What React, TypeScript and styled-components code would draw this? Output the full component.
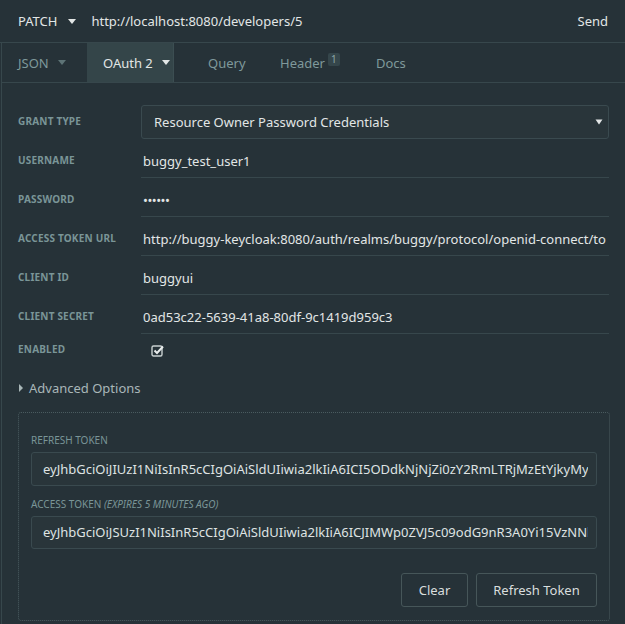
import React from "react";
import styled, { createGlobalStyle } from "styled-components";

const Global = createGlobalStyle`
  html, body { margin: 0; padding: 0; background: #263238; }
  body { font-family: "Noto Sans", "Open Sans", sans-serif; color: #d9dede; }
  * { box-sizing: border-box; }
`;

const Page = styled.div`
  width: 625px;
  height: 624px;
  background: #263238;
  overflow: hidden;
  display: flex;
  flex-direction: column;
`;

const TopBar = styled.div`
  height: 43px;
  display: flex;
  align-items: center;
  padding: 0 18px;
  font-size: 13px;
  border-bottom: 1px solid #37474c;
  color: #e2e6e6;
`;

const Method = styled.div`
  display: flex;
  align-items: center;
  gap: 11px;
  margin-right: 15px;
`;

const Caret = styled.span<{ $c?: string }>`
  width: 0;
  height: 0;
  border-left: 4px solid transparent;
  border-right: 4px solid transparent;
  border-top: 5px solid ${(p) => p.$c || "#e2e6e6"};
  display: inline-block;
`;

const Url = styled.div`
  flex: 1;
`;

const Send = styled.div`
  margin-right: -1px;
`;

const Body = styled.div`
  flex: 1;
  min-width: 0;
  margin-left: 1px;
  border-left: 1px solid #37474c;
  display: flex;
  flex-direction: column;
`;

const Tabs = styled.div`
  height: 40px;
  display: flex;
  border-bottom: 1px solid #37474c;
  font-size: 13px;
`;

const Tab = styled.div<{ $active?: boolean; $w: number; $pl: number }>`
  width: ${(p) => p.$w}px;
  padding-left: ${(p) => p.$pl}px;
  display: flex;
  align-items: center;
  gap: 9px;
  color: ${(p) => (p.$active ? "#e2e6e6" : "#7f999b")};
  background: ${(p) => (p.$active ? "#344549" : "transparent")};
  border-right: ${(p) => (p.$active ? "1px solid #3c4e52" : "none")};
`;

const Badge = styled.span`
  font-size: 10px;
  background: #35464b;
  color: #8fa6a8;
  border-radius: 2px;
  padding: 0 3px;
  line-height: 13px;
  margin-left: -6px;
  margin-top: -7px;
`;

const Form = styled.div`
  padding: 22px 16px 0 16px;
  display: flex;
  flex-direction: column;
  gap: 5px;
`;

const Row = styled.div<{ $h?: number }>`
  display: grid;
  grid-template-columns: 123px minmax(0, 1fr);
  align-items: center;
  height: ${(p) => p.$h || 34}px;
`;

const Label = styled.div`
  font-size: 10px;
  font-weight: 700;
  color: #7a9597;
  letter-spacing: 0.2px;
  margin-top: -2px;
`;

const Select = styled.div`
  height: 34px;
  border: 1px solid #3a4a4f;
  border-radius: 3px;
  background: #29353a;
  display: flex;
  align-items: center;
  justify-content: space-between;
  padding: 0 5px 0 12px;
  font-size: 13px;
  color: #e2e6e6;
`;

const Field = styled.div`
  height: 34px;
  min-width: 0;
  border-bottom: 1px solid #37474c;
  display: flex;
  align-items: center;
  padding: 0 3px 0 2px;
  font-size: 13px;
  color: #e2e6e6;
`;

const Clip = styled.span`
  flex: 1;
  min-width: 0;
  overflow: hidden;
  white-space: nowrap;
`;

const Dots = styled.span`
  font-size: 13px;
  letter-spacing: -0.5px;
`;

const CheckWrap = styled.div`
  padding-left: 10px;
  display: flex;
  align-items: center;
`;

const Advanced = styled.div`
  display: flex;
  align-items: center;
  gap: 6px;
  font-size: 13px;
  color: #a9b7b8;
  padding-left: 1px;
  margin-top: 13px;
`;

const Tri = styled.span`
  width: 0;
  height: 0;
  border-top: 4px solid transparent;
  border-bottom: 4px solid transparent;
  border-left: 4px solid #a9b7b8;
`;

const Box = styled.div`
  margin: 15px 15px 0 16px;
  height: 209px;
  min-width: 0;
  border: 1px dotted #4a5b5f;
  border-radius: 3px;
  padding: 21px 12px 13px 12px;
  display: flex;
  flex-direction: column;
`;

const BoxLabel = styled.div<{ $gap?: number }>`
  font-size: 10px;
  color: #7a9597;
  line-height: 12px;
  margin-top: ${(p) => p.$gap || 0}px;
  margin-bottom: 6px;
`;

const Em = styled.em`
  font-style: italic;
`;

const TokenInput = styled.div`
  height: 34px;
  min-width: 0;
  border: 1px solid #3a4a4f;
  border-radius: 3px;
  background: #29353a;
  display: flex;
  align-items: center;
  padding: 0 8px 0 11px;
  font-size: 13px;
  color: #dfe3e3;
`;

const Actions = styled.div`
  display: flex;
  justify-content: flex-end;
  gap: 8px;
  margin-top: 24px;
`;

const Button = styled.div<{ $w: number }>`
  width: ${(p) => p.$w}px;
  height: 34px;
  border: 1px solid #465659;
  border-radius: 3px;
  display: flex;
  align-items: center;
  justify-content: center;
  font-size: 13px;
  color: #d9dede;
`;

export default function App() {
  return (
    <Page>
      <Global />
      <TopBar>
        <Method>
          PATCH <Caret />
        </Method>
        <Url>http://localhost:8080/developers/5</Url>
        <Send>Send</Send>
      </TopBar>
      <Body>
        <Tabs>
          <Tab $w={85} $pl={16}>
            JSON <Caret $c="#5d7376" />
          </Tab>
          <Tab $w={87} $pl={16} $active>
            OAuth 2 <Caret />
          </Tab>
          <Tab $w={106} $pl={34}>Query</Tab>
          <Tab $w={96} $pl={0}>
            Header <Badge>1</Badge>
          </Tab>
          <Tab $w={80} $pl={0}>Docs</Tab>
        </Tabs>
        <Form>
          <Row>
            <Label>GRANT TYPE</Label>
            <Select>
              <span>Resource Owner Password Credentials</span>
              <svg width="8" height="6" viewBox="0 0 8 6">
                <path d="M0.5 0.5 L7.5 0.5 L4 5.5 Z" fill="#e2e6e6" />
              </svg>
            </Select>
          </Row>
          <Row>
            <Label>USERNAME</Label>
            <Field>
              <Clip>buggy_test_user1</Clip>
            </Field>
          </Row>
          <Row>
            <Label>PASSWORD</Label>
            <Field>
              <Dots>••••••</Dots>
            </Field>
          </Row>
          <Row>
            <Label>ACCESS TOKEN URL</Label>
            <Field>
              <Clip>http://buggy-keycloak:8080/auth/realms/buggy/protocol/openid-connect/token</Clip>
            </Field>
          </Row>
          <Row>
            <Label>CLIENT ID</Label>
            <Field>
              <Clip>buggyui</Clip>
            </Field>
          </Row>
          <Row>
            <Label>CLIENT SECRET</Label>
            <Field>
              <Clip>0ad53c22-5639-41a8-80df-9c1419d959c3</Clip>
            </Field>
          </Row>
          <Row $h={22}>
            <Label>ENABLED</Label>
            <CheckWrap>
              <svg width="13" height="13" viewBox="0 0 13 13">
                <rect x="1" y="2" width="10" height="10" rx="1.5" fill="none" stroke="#c8d0d0" strokeWidth="1.4" />
                <path d="M3.5 6.5 L6 9 L12 2.5" fill="none" stroke="#e8ecec" strokeWidth="2" />
              </svg>
            </CheckWrap>
          </Row>
          <Advanced>
            <Tri />
            Advanced Options
          </Advanced>
        </Form>
        <Box>
          <BoxLabel>REFRESH TOKEN</BoxLabel>
          <TokenInput>
            <Clip>eyJhbGciOiJIUzI1NiIsInR5cCIgOiAiSldUIiwia2lkIiA6ICI5ODdkNjNjZi0zY2RmLTRjMzEtYjkyMy00</Clip>
          </TokenInput>
          <BoxLabel $gap={12}>
            ACCESS TOKEN <Em>(EXPIRES 5 MINUTES AGO)</Em>
          </BoxLabel>
          <TokenInput>
            <Clip>eyJhbGciOiJSUzI1NiIsInR5cCIgOiAiSldUIiwia2lkIiA6ICJIMWp0ZVJ5c09odG9nR3A0Yi15VzNNbEx</Clip>
          </TokenInput>
          <Actions>
            <Button $w={67}>Clear</Button>
            <Button $w={121}>Refresh Token</Button>
          </Actions>
        </Box>
      </Body>
    </Page>
  );
}
